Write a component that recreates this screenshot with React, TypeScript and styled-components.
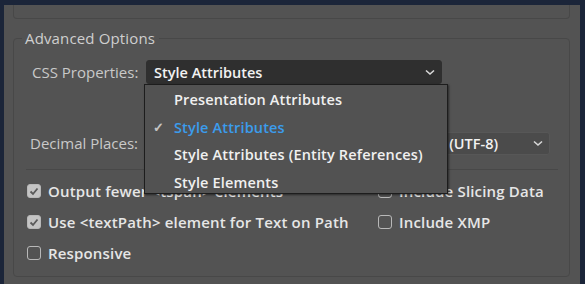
import React from 'react';
import styled, { createGlobalStyle } from 'styled-components';

const Global = createGlobalStyle`
    html, body {
        margin: 0;
        padding: 0;
        background: #1b2539;
        font-family: "Open Sans", "Noto Sans", sans-serif;
        -webkit-font-smoothing: antialiased;
    }
`

const Window = styled.div`
    margin: 5px 5px 0 4px;
    height: 279px;
    background: #535353;
    padding: 0 10px 0 9px;
    box-sizing: border-box;
    overflow: hidden;
`
const TopGroup = styled.div`
    height: 13px;
    border: 1px solid #484848;
    border-top: none;
    border-radius: 0 0 4px 4px;
`
const Group = styled.fieldset`
    position: relative;
    margin: 10px 0 0 0;
    padding: 0 11px 0 12px;
    height: 248px;
    box-sizing: border-box;
    border: 1px solid #484848;
    border-radius: 4px;
    legend {
        margin-left: -4px;
        padding: 0 4px 0 3px;
        font-size: 15px;
        letter-spacing: 0.15px;
        color: #cfcfcf;
        line-height: 18px;
    }
`
const Row = styled.div<{ top: number }>`
    display: flex;
    align-items: center;
    height: 24px;
    margin-top: ${p => p.top}px;
`
const Label = styled.span<{ w: number; indent: number }>`
    width: ${p => p.w}px;
    padding-left: ${p => p.indent}px;
    box-sizing: border-box;
    font-size: 15px;
    color: #c9c9c9;
    white-space: nowrap;
`
const SelectWrap = styled.div`
    position: relative;
`
const Select = styled.div<{ w: number; dark?: boolean }>`
    display: flex;
    align-items: center;
    justify-content: space-between;
    width: ${p => p.w}px;
    height: ${p => (p.dark ? 24 : 23)}px;
    box-sizing: border-box;
    padding: 0 6px 0 ${p => (p.dark ? 7 : 8)}px;
    border-radius: 3px;
    background: ${p => (p.dark ? '#2f2f2f' : '#4b4b4b')};
    border: 1px solid ${p => (p.dark ? '#2f2f2f' : '#575757')};
    color: #f2f2f2;
    font-size: 14.5px;
    font-weight: 600;
    white-space: nowrap;
`
const Chevron = () => (
    <svg width="10" height="7" viewBox="0 0 10 7">
        <path d="M1 1.5 L5 5 L9 1.5" fill="none" stroke="#d8d8d8" strokeWidth="1.6" />
    </svg>
)
const Menu = styled.div`
    position: absolute;
    top: 24px;
    left: -2px;
    width: 304px;
    height: 110px;
    box-sizing: border-box;
    padding-top: 1px;
    background: #525252;
    border: 1px solid #1d1d1d;
    box-shadow: 1px 1px 2px rgba(0, 0, 0, 0.5);
    z-index: 10;
`
const MenuItem = styled.div<{ active?: boolean }>`
    display: flex;
    align-items: center;
    height: 27.5px;
    padding-left: 7px;
    font-size: 14.5px;
    letter-spacing: 0.15px;
    font-weight: 600;
    color: ${p => (p.active ? '#3b9cec' : '#f0f0f0')};
    white-space: nowrap;
`
const Tick = styled.span`
    width: 21px;
    padding-left: 1px;
    color: #c4c4c4;
    font-size: 13px;
`
const Separator = styled.div`
    height: 1px;
    background: #484848;
    margin: 14px 0 0 0;
`
const Checks = styled.div`
    display: grid;
    grid-template-columns: 351px 1fr;
    row-gap: 7px;
    margin-top: 9px;
`
const Check = styled.label`
    display: flex;
    align-items: center;
    gap: 7px;
    height: 24px;
    font-size: 15px;
    letter-spacing: 0.17px;
    font-weight: 600;
    color: #e6e6e6;
    white-space: nowrap;
`
const Box = styled.span<{ on?: boolean }>`
    display: inline-flex;
    align-items: center;
    justify-content: center;
    width: 14px;
    height: 14px;
    margin-left: 1px;
    box-sizing: border-box;
    border-radius: 3px;
    border: 1.5px solid #b8b8b8;
    background: ${p => (p.on ? '#c4c4c4' : 'transparent')};
`

const CheckItem = ({ on, children }: { on?: boolean; children: React.ReactNode }) => (
    <Check>
        <Box on={on}>
            {on && (
                <svg width="10" height="9" viewBox="0 0 10 9">
                    <path d="M1.5 4.5 L4 7 L8.5 1.5" fill="none" stroke="#5a5a5a" strokeWidth="1.8" />
                </svg>
            )}
        </Box>
        {children}
    </Check>
)

const App = (): JSX.Element => {
    const items = [
        'Presentation Attributes',
        'Style Attributes',
        'Style Attributes (Entity References)',
        'Style Elements',
    ]
    return (
        <>
            <Global />
            <Window>
                <TopGroup />
                <Group>
                    <legend>Advanced Options</legend>
                    <Row top={13}>
                        <Label w={120} indent={6}>CSS Properties:</Label>
                        <SelectWrap>
                            <Select w={296} dark>
                                Style Attributes
                                <Chevron />
                            </Select>
                            <Menu>
                                {items.map(t => (
                                    <MenuItem key={t} active={t === 'Style Attributes'}>
                                        <Tick>{t === 'Style Attributes' ? '✓' : ''}</Tick>
                                        {t}
                                    </MenuItem>
                                ))}
                            </Menu>
                        </SelectWrap>
                    </Row>
                    <Row top={47}>
                        <Label w={120} indent={4}>Decimal Places:</Label>
                        <Select w={80}>3<Chevron /></Select>
                        <Label w={153} indent={60}>Encoding:</Label>
                        <Select w={171}>
                            Unicode (UTF-8)
                            <Chevron />
                        </Select>
                    </Row>
                    <Separator />
                    <Checks>
                        <CheckItem on>Output fewer &lt;tspan&gt; elements</CheckItem>
                        <CheckItem>Include Slicing Data</CheckItem>
                        <CheckItem on>Use &lt;textPath&gt; element for Text on Path</CheckItem>
                        <CheckItem>Include XMP</CheckItem>
                        <CheckItem>Responsive</CheckItem>
                    </Checks>
                </Group>
            </Window>
        </>
    )
}

export default App
